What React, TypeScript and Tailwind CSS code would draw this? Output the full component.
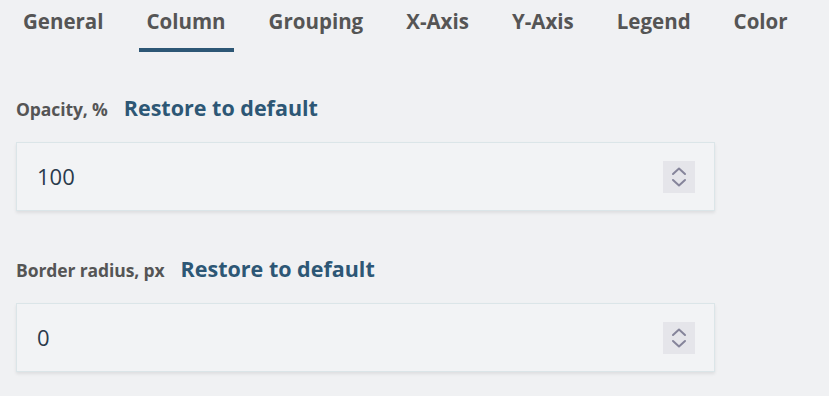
import { useState } from 'react';

const tabs = ['General', 'Column', 'Grouping', 'X-Axis', 'Y-Axis', 'Legend', 'Color'];

function Spinner() {
  return (
    <div className="w-[32px] h-[32px] bg-[#e5e5ea] flex items-center justify-center">
      <svg width="16" height="26" viewBox="0 0 16 26" fill="none" stroke="#85849a" strokeWidth="2" strokeLinecap="round" strokeLinejoin="round">
        <path d="M2 10 L8 4.5 L14 10" />
        <path d="M2 16 L8 21.5 L14 16" />
      </svg>
    </div>
  );
}

function NumberField({ label, value }: { label: string; value: string }) {
  return (
    <div>
      <div className="flex items-baseline gap-[16px] h-[28px]">
        <span className="text-[17.5px] font-bold text-[#555555] tracking-[-0.1px]">{label}</span>
        <button className="text-[21.5px] font-bold text-[#2d5775]">Restore to default</button>
      </div>
      <div className="mt-[22px] w-[699px] h-[69px] border border-[#dbe5e8] bg-[#f2f3f5] shadow-[0_2px_3px_rgba(0,0,0,0.08)] flex items-center justify-between pl-[20px] pr-[19px]">
        <span className="text-[22px] text-[#2a3a4c]">{value}</span>
        <Spinner />
      </div>
    </div>
  );
}

export default function App() {
  const [active, setActive] = useState('Column');

  return (
    <div className="w-[829px] h-[396px] bg-[#f0f1f3] overflow-hidden" style={{ fontFamily: '"Open Sans", "Noto Sans", sans-serif' }}>
      <nav className="flex pl-[15px] h-[52px]">
        {tabs.map((t) => (
          <button
            key={t}
            onClick={() => setActive(t)}
            className={`relative shrink-0 whitespace-nowrap px-[8px] mr-[27px] pt-[6px] self-stretch flex items-start text-[20.5px] font-bold text-[#555555] ${t === active ? 'after:absolute after:left-0 after:right-0 after:bottom-[0px] after:h-[4px] after:bg-[#2d5775]' : ''}`}
          >
            {t}
          </button>
        ))}
      </nav>
      <div className="pl-[16px] pt-[40px] flex flex-col gap-[42px]">
        <NumberField label="Opacity, %" value="100" />
        <NumberField label="Border radius, px" value="0" />
      </div>
    </div>
  );
}
